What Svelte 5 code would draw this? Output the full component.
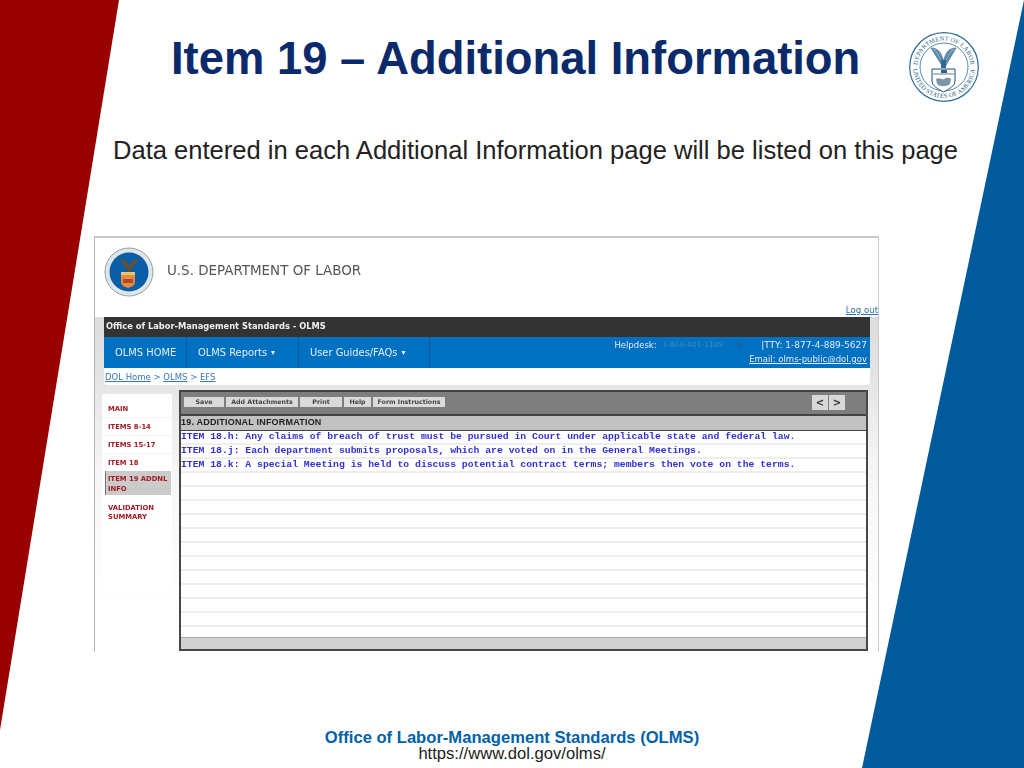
<script>
  const sideItems = [
    { label: 'MAIN', h: 18 },
    { label: 'ITEMS 8-14', h: 18 },
    { label: 'ITEMS 15-17', h: 18 },
    { label: 'ITEM 18', h: 18 }
  ];
  const filled = [
    'ITEM 18.h: Any claims of breach of trust must be pursued in Court under applicable state and federal law.',
    'ITEM 18.j: Each department submits proposals, which are voted on in the General Meetings.',
    'ITEM 18.k: A special Meeting is held to discuss potential contract terms; members then vote on the terms.'
  ];
  const rows = [...filled, ...Array(12).fill('')];
  const tools = [
    ['Save', 40],
    ['Add Attachments', 72],
    ['Print', 42],
    ['Help', 27],
    ['Form Instructions', 72]
  ];
</script>

<div class="slide">
  <svg class="shapes" width="1024" height="768" viewBox="0 0 1024 768" aria-hidden="true">
    <polygon points="0,0 119,0 0,730" fill="#990000" />
    <polygon points="1024,0 1024,768 862,768" fill="#005a9c" />
  </svg>

  <header class="head">
    <h1>Item 19 – Additional Information</h1>
    <svg class="seal" width="70" height="70" viewBox="0 0 70 70" aria-label="Department of Labor seal">
      <defs>
        <path id="arcTop" d="M8.5 35a26.5 26.5 0 0 1 53 0" />
        <path id="arcBot" d="M4 35a31 31 0 0 0 62 0" />
      </defs>
      <circle cx="35" cy="35" r="34.3" fill="#fff" stroke="#2b6a9b" stroke-width="1.2" />
      <circle cx="35" cy="35" r="24" fill="#fff" stroke="#2b6a9b" stroke-width="0.8" />
      <text class="sealtext"><textPath href="#arcTop" startOffset="50%" text-anchor="middle">DEPARTMENT OF LABOR</textPath></text>
      <text class="sealtext"><textPath href="#arcBot" startOffset="50%" text-anchor="middle">UNITED STATES OF AMERICA</textPath></text>
      <path d="M34 35 22 16c4 0 8 2 10 6l2 5zM36 35l11-19c-4 0-8 2-10 6l-2 5z" fill="#7fa6c0" stroke="#24587f" stroke-width=".6" />
      <path d="M25 19l7 11M28 18l5 10M44 19l-7 11M41 18l-5 10" stroke="#24587f" stroke-width=".6" fill="none" />
      <path d="M32 28h5v8h-5z" fill="#2d6b92" />
      <path d="M23 37h23v12c0 5-6 8-11.500 11-5.500-3-11.500-6-11.500-11z" fill="#fff" stroke="#1e4e74" stroke-width="1" />
      <path d="M24 42h21" stroke="#8aa5b8" stroke-width="1.4" />
      <path d="M27 47c3-2 6 1 8 0s5-2 7 0l-1 5c-4 3-10 3-13 0z" fill="#7c96a8" />
      <path d="M32 38h6v3h-6z" fill="#34607f" />
    </svg>
  </header>

  <p class="sub">Data entered in each Additional Information page will be listed on this page</p>

  <section class="shot">
    <div class="brand">
      <svg width="50" height="50" viewBox="0 0 50 50" aria-hidden="true">
        <circle cx="25" cy="25" r="24" fill="#dfe6ea" stroke="#8ea2ad" />
        <circle cx="25" cy="25" r="19.500" fill="#0a5ea8" />
        <path d="M24 25 15 11c4 1 7 3 9 6l1 2 1-2c2-3 5-5 9-6l-9 14z" fill="#5f5238" />
        <path d="M17 25h14v10c0 3-3 5-7 6-4-1-7-3-7-6z" fill="#e28d3e" />
        <path d="M17 25h14v3H17z" fill="#e9c27a" />
        <path d="M19 32h10v4H19z" fill="#b6452c" />
      </svg>
      <span>U.S. DEPARTMENT OF LABOR</span>
      <a class="logout" href="#logout">Log out</a>
    </div>

    <div class="main">
      <div class="darkbar">Office of Labor-Management Standards - OLMS</div>
      <nav class="nav">
        <span class="tab home">OLMS HOME</span>
        <span class="tab rep">OLMS Reports <i>▾</i></span>
        <span class="tab guide">User Guides/FAQs <i>▾</i></span>
        <div class="help">
          <div class="l1">
            <span>Helpdesk:</span>
            <span class="faint">1-866-401-1109</span>
            <svg width="9" height="9" viewBox="0 0 9 9" aria-hidden="true"><path d="M2 1c-1 3 1 6 5 7l1-2-2-1-1 1-2-2 1-1-1-2z" fill="#1d5f95" /></svg>
            <span class="tty">|TTY: 1-877-4-889-5627</span>
          </div>
          <u>Email: olms-public@dol.gov</u>
        </div>
      </nav>
      <div class="crumbs"><u>DOL Home</u> &gt; <u>OLMS</u> &gt; <u>EFS</u></div>

      <div class="body">
        <aside class="side">
          {#each sideItems as item}
            <div class="sitem">{item.label}</div>
          {/each}
          <div class="sitem active">ITEM 19 ADDNL INFO</div>
          <div class="sitem last">VALIDATION SUMMARY</div>
        </aside>

        <div class="form">
          <div class="toolbar">
            {#each tools as [name, w]}
              <button style="width:{w}px">{name}</button>
            {/each}
            <div class="pager">
              <button>&lt;</button>
              <button>&gt;</button>
            </div>
          </div>
          <div class="ftitle">19. ADDITIONAL INFORMATION</div>
          <div class="rows">
            {#each rows as row}
              <div class="row">{row}</div>
            {/each}
          </div>
          <div class="ffoot"></div>
        </div>
      </div>
    </div>
  </section>

  <footer class="foot">
    <strong>Office of Labor-Management Standards (OLMS)</strong>
    <span>https://www.dol.gov/olms/</span>
  </footer>
</div>

<style>
  :global(body) { margin: 0; background: #fff; }
  .slide {
    position: relative;
    width: 1024px;
    height: 768px;
    overflow: hidden;
    background: #fff;
    font-family: "Liberation Sans", Arial, sans-serif;
  }
  .shapes { position: absolute; inset: 0; }
  .head {
    position: relative;
    display: flex;
    justify-content: space-between;
    padding: 32px 45px 0 171px;
  }
  h1 {
    margin: 2px 0 0;
    font-size: 45.4px;
    line-height: 50px;
    font-weight: 700;
    color: #0a2a6c;
    white-space: nowrap;
  }
  .seal { display: block; flex: none; }
  .sealtext { font: 6.3px "Liberation Serif", serif; fill: #2a5d86; letter-spacing: .25px; }
  .sub {
    position: relative;
    margin: 34px 0 0;
    padding-left: 113px;
    font-size: 25.55px;
    line-height: 29px;
    color: #222;
    white-space: nowrap;
  }
  .shot {
    position: relative;
    margin: 71px 0 0 94px;
    width: 785px;
    height: 416px;
    box-sizing: border-box;
    border-top: 2px solid #c9c9c9;
    border-left: 1px solid #b5b5b5;
    border-right: 1px solid #c9c9c9;
    display: flex;
    flex-direction: column;
    background: #fff;
    filter: blur(0.35px);
    font-family: "DejaVu Sans", Verdana, sans-serif;
  }
  .brand {
    position: relative;
    height: 79px;
    flex: none;
    display: flex;
    align-items: flex-start;
    padding: 9px 0 0 9px;
    box-sizing: border-box;
  }
  .brand span {
    margin: 16px 0 0 13px;
    font-size: 13.45px;
    line-height: 16px;
    color: #555;
  }
  .logout {
    position: absolute;
    right: 0;
    bottom: 1px;
    font-size: 8.6px;
    line-height: 11px;
    color: #2a6fb5;
  }
  .main {
    flex: 1;
    min-height: 0;
    padding: 0 8px 0 9px;
    background: linear-gradient(#dcdcdc 0, #e6e6e6 70px, #f5f5f5 150px, #fff 290px);
    display: flex;
    flex-direction: column;
  }
  .darkbar {
    height: 20px;
    flex: none;
    background: #333;
    color: #eee;
    font-size: 8.3px;
    font-weight: 700;
    line-height: 19px;
    padding-left: 2px;
  }
  .nav {
    height: 31px;
    flex: none;
    background: #0070c0;
    display: flex;
    color: #e4eef7;
    font-size: 9.9px;
  }
  .tab {
    display: flex;
    align-items: center;
    gap: 4px;
    box-sizing: border-box;
    border-right: 1px solid #0a5a9c;
    white-space: nowrap;
    padding-left: 11px;
  }
  .tab i { font-style: normal; font-size: 8px; }
  .home { width: 83px; }
  .rep { width: 112px; }
  .guide { width: 131px; }
  .help {
    margin-left: auto;
    padding: 1px 3px 0 0;
    text-align: right;
    font-size: 8.5px;
    line-height: 14px;
  }
  .l1 { display: flex; align-items: center; justify-content: flex-end; }
  .faint { color: #3e8bc9; font-size: 7.5px; margin: 0 12px 0 6px; }
  .tty { margin-left: 17px; font-size: 9px; }
  .crumbs {
    height: 17px;
    flex: none;
    background: #fff;
    border-radius: 0 0 3px 3px;
    font-size: 8.5px;
    line-height: 19px;
    padding-left: 1px;
    color: #3b78b8;
  }
  .body {
    flex: 1;
    min-height: 0;
    display: flex;
    margin: 5px 2px 0 -2px;
    gap: 7px;
  }
  .side {
    width: 70px;
    flex: none;
    background: #fff;
    box-sizing: border-box;
    margin-top: 4px;
    height: 196px;
    padding-top: 6px;
    color: #a31a24;
    font-size: 6.8px;
    font-weight: 700;
  }
  .sitem {
    height: 18px;
    line-height: 18px;
    padding-left: 6px;
    box-sizing: border-box;
    border-bottom: 1px solid #f4f4f4;
    white-space: nowrap;
  }
  .active {
    height: 24px;
    margin: -1px 1px 1px 3px;
    padding: 4px 0 0 2px;
    line-height: 9.5px;
    white-space: normal;
    background: #cbcbcb;
    border-left: 1px solid #777;
    border-bottom: 0;
  }
  .last {
    height: auto;
    margin-top: 9px;
    line-height: 9px;
    white-space: normal;
    border: 0;
  }
  .form {
    flex: 1;
    min-width: 0;
    display: flex;
    flex-direction: column;
    height: 261px;
    box-sizing: border-box;
    border: 2px solid #474747;
    border-top: 2px solid #444;
    background: #fff;
  }
  .toolbar {
    height: 24px;
    flex: none;
    box-sizing: border-box;
    background: #7e7e7e;
    display: flex;
    align-items: center;
    gap: 2px;
    padding: 0 21px 2px 3px;
    border-bottom: 2px solid #444;
  }
  button {
    appearance: none;
    border: 0;
    margin: 0;
    padding: 0;
    height: 10px;
    background: #dadada;
    color: #444;
    font: 700 6.3px/10px "DejaVu Sans", Verdana, sans-serif;
    white-space: nowrap;
  }
  .pager { margin-left: auto; display: flex; gap: 1px; }
  .pager button {
    width: 16px;
    height: 15px;
    font-size: 10px;
    line-height: 15px;
    color: #333;
    background: #d8d8d8;
  }
  .ftitle {
    height: 15px;
    flex: none;
    box-sizing: border-box;
    background: #c2c2c2;
    border-bottom: 1px solid #444;
    font: 700 9px/13px "Liberation Sans", Arial, sans-serif;
    letter-spacing: .2px;
    color: #222;
  }
  .rows { flex: 1; min-height: 0; overflow: hidden; }
  .row {
    height: 14px;
    box-sizing: border-box;
    border-bottom: 2px solid #eeeeee;
    font: 700 9.76px/12px "Liberation Mono", "Courier New", monospace;
    color: #3030d8;
    white-space: pre;
  }
  .ffoot {
    height: 11px;
    flex: none;
    background: #d0d0d0;
    border-top: 1px solid #aaa;
  }
  .foot {
    position: relative;
    margin-top: 77px;
    display: flex;
    flex-direction: column;
    align-items: center;
  }
  .foot strong {
    font-size: 16.6px;
    line-height: 18px;
    color: #0061a8;
  }
  .foot span {
    font-size: 16.6px;
    line-height: 14px;
    color: #222;
  }
</style>
